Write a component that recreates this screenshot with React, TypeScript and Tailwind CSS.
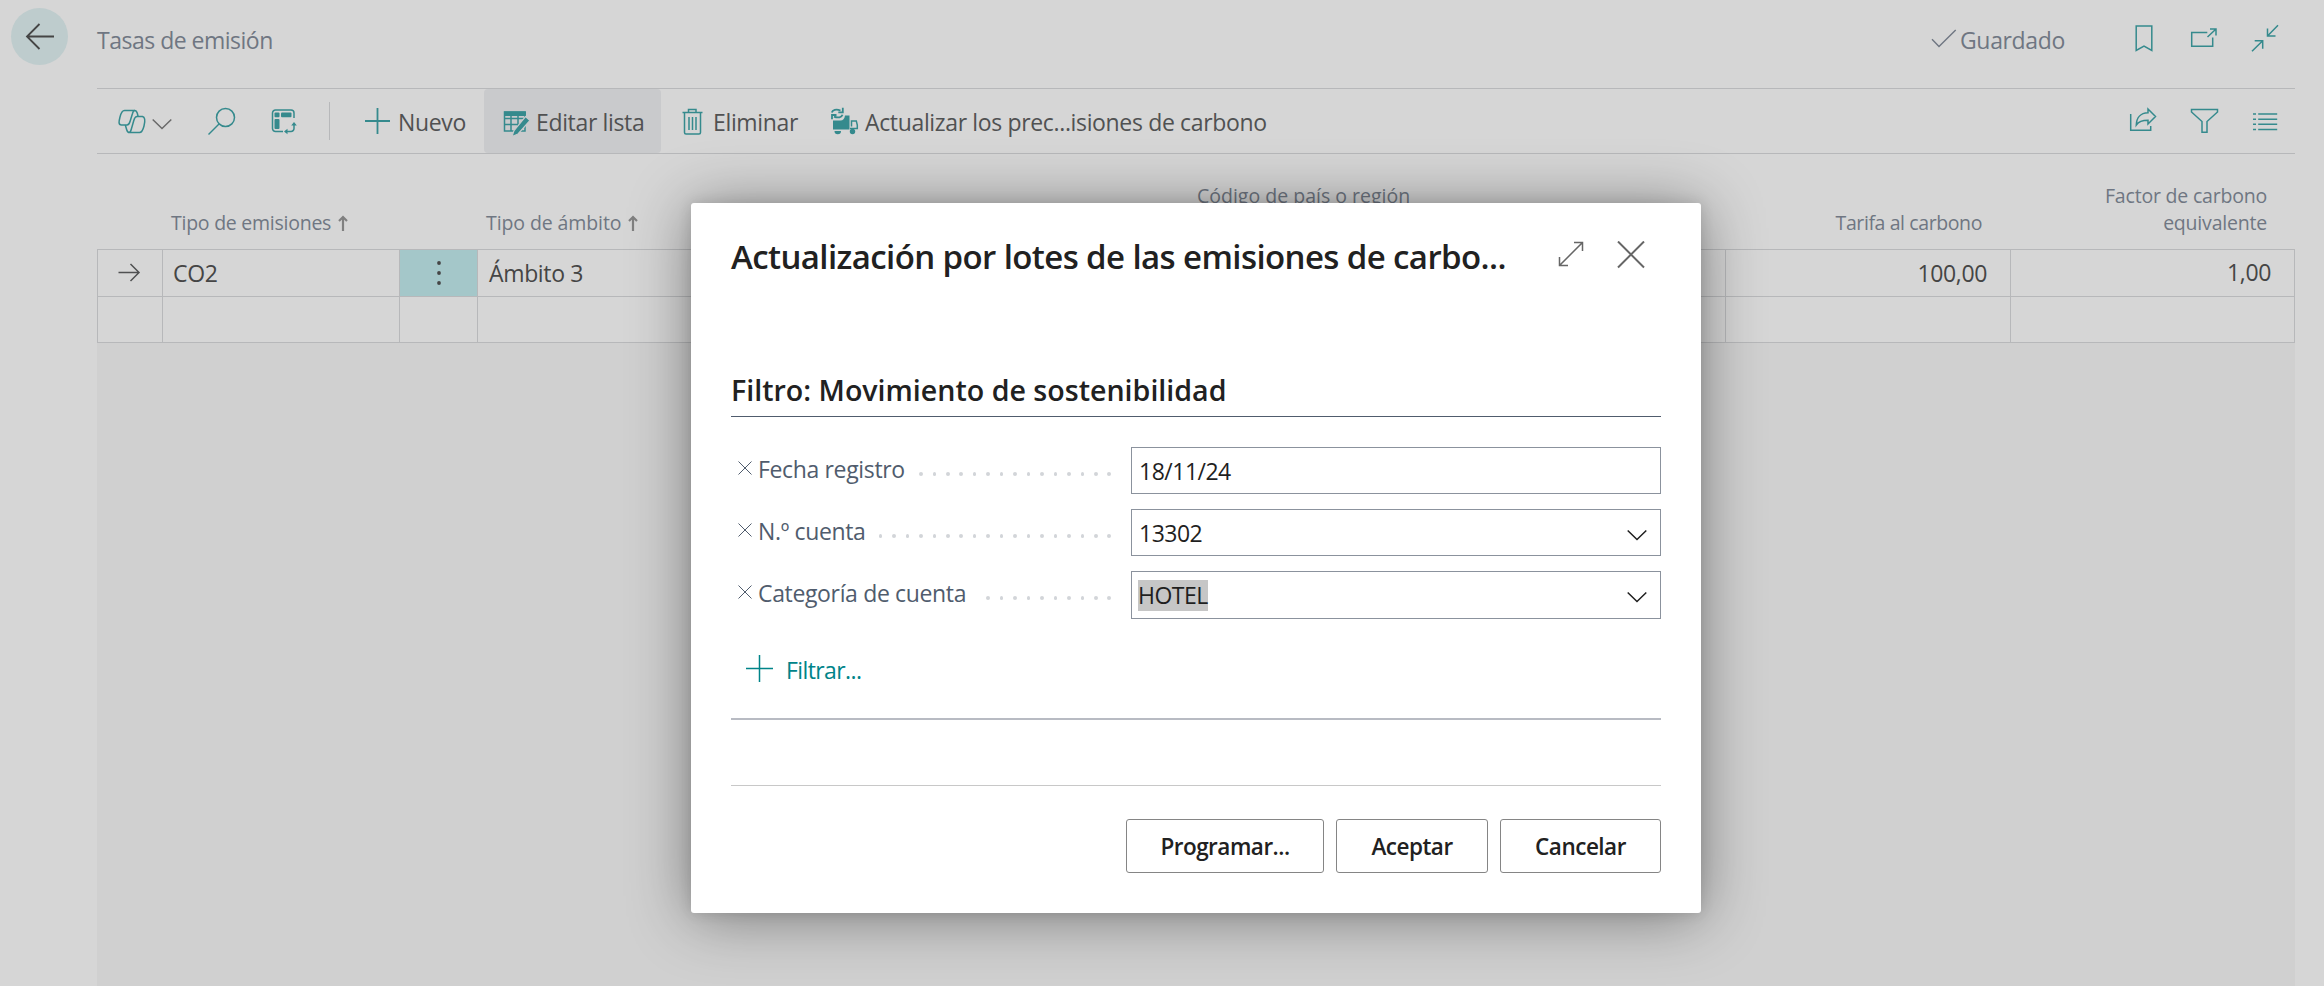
import type { ReactNode } from "react";

type IconProps = { children: ReactNode; className?: string; size?: string };

function Icon({ children, className = "size-8", size = "0 0 32 32" }: IconProps) {
  return (
    <svg viewBox={size} fill="none" stroke="currentColor" strokeWidth="1.5" className={`shrink-0 ${className}`}>
      {children}
    </svg>
  );
}

function Chevron() {
  return (
    <Icon className="h-8 w-5" size="0 0 20 32">
      <path d="M0.7 13.5 10 22.5 19.3 13.5" />
    </Icon>
  );
}

function SortArrow() {
  return (
    <svg viewBox="0 0 10 16" fill="none" stroke="#808080" strokeWidth="2.2" className="h-4 w-[10px] shrink-0">
      <path d="M5 16V2M1 6l4-4 4 4" />
    </svg>
  );
}

function Header() {
  return (
    <header className="flex h-[88px] shrink-0 items-center pb-2 text-[#6f7682]">
      <h1 className="tracking-[-0.5px]">Tasas de emisión</h1>
      <span className="ml-auto flex w-[200px] items-center">
        <Icon>
          <path d="M4 15.300 11 22.500 27.700 6" strokeWidth="1.4" />
        </Icon>
        <span>Guardado</span>
      </span>
      <div className="mr-[14px] flex text-[#358a8d]">
        <Icon>
          <path d="M8.200 2h15.600v24.500l-7.800-4.500-7.800 4.500z" />
        </Icon>
        <Icon className="ml-7 size-8">
          <path d="M19.300 8.500H3.700V22.200h21V13.500M19.500 13 28 5M22 5h6v6.500" />
        </Icon>
        <Icon className="ml-[29px] size-8">
          <path d="M29 1.300 18.500 12M18.500 4.500V12H26.500M3 27.300 13.700 16.700M5.700 16.700h8V24.700" />
        </Icon>
      </div>
    </header>
  );
}

function Toolbar() {
  return (
    <div className="flex h-[66px] shrink-0 items-center border-y border-[#b7b8ba] text-[#505152]">
      <div className="flex items-center pl-[19px] text-[#358a8d]">
        <Icon>
          <path d="M8.500 5.500h10c1.500 0 2.300 1 2.800 2.800l.7 2.700M8.500 5.500C6 5.500 5 8 4 12s-2 8 1.500 8H11c2 0 2.500-1.500 3.200-4l2.300-7.500c.4-1.500 1-3 2.500-3M23.500 27.500h-10c-1.500 0-2.300-1-2.800-2.800L9.300 20M23.500 27.500c2.500 0 3.500-2.500 4.500-6.500s2-8.500-1.500-9.500H21c-2 0-2.500 1.500-3.200 4l-2.300 8c-.4 1.500-1 4-2.500 4" />
        </Icon>
        <span className="ml-1 pt-px text-[#6a6a6a]">
          <Chevron />
        </span>
        <Icon className="ml-[33px] size-8">
          <circle cx="20.500" cy="12.500" r="9" />
          <path d="M14 19 3.500 29.500" />
        </Icon>
        <Icon className="ml-[31px] size-8">
          <path d="M15 26.500H7.500a3 3 0 0 1-3-3V8a3 3 0 0 1 3-3H23a3 3 0 0 1 3 3v5M17.500 26.500H23a3 3 0 0 0 3-3V19" />
          <path d="M26 17l2.800 3.500h-5.600zM16 26.500l3.500-2.800v5.600z" fill="currentColor" stroke="none" />
          <g fill="currentColor" stroke="none">
            <rect x="6.500" y="7.500" width="5" height="4.800" rx="1" />
            <rect x="13" y="7.500" width="10.500" height="4.800" rx="1" />
            <rect x="6.500" y="14" width="5" height="10" rx="1" />
          </g>
        </Icon>
      </div>
      <div className="ml-[29px] h-[38px] w-px bg-[#b7b8ba]" />
      <div className="flex h-full w-[154px] items-center gap-[3px] pl-[33px]">
        <Icon className="size-8 text-[#358a8d]">
          <path d="M14.500 3v26M2 16h25" strokeWidth="1.800" />
        </Icon>
        <span className="pt-0.5">Nuevo</span>
      </div>
      <div className="flex h-full w-[177px] items-center gap-1 rounded-[4px] bg-[#c9cacc] pl-4">
        <Icon className="size-8 text-[#358a8d]">
          <path d="M4.500 7h20.500v19H4.500zM4.500 13.500h20M4.500 19.500h15M11 11v15M18 11v14" />
          <path d="M4 6.500h22V11H4z" fill="currentColor" stroke="none" />
          <path d="M25.500 11.500l4.500 4-12 13.500-6 2.500 2-6z" fill="currentColor" stroke="#c9cacc" strokeWidth="1.200" />
        </Icon>
        <span className="pt-0.5">Editar lista</span>
      </div>
      <div className="flex h-full w-[151px] items-center gap-1 pl-4">
        <Icon className="size-8 text-[#358a8d]">
          <path d="M5.500 7.500h20M11.500 7V4.500h7.500V7M7.500 8v19.500q0 1.500 1.500 1.500h13q1.500 0 1.500-1.500V8M12 12v13M15.500 12v13M19 12v13" />
        </Icon>
        <span className="pt-0.5">Eliminar</span>
      </div>
      <div className="flex h-full items-center gap-[5px] pl-4">
        <Icon className="size-8 text-[#358a8d]">
          <path d="M5 15.500h7.500c2.500 0 4-1.500 4.500-5H21.500V24.500H5z" fill="currentColor" stroke="none" />
          <path d="M23.500 21.500V16h4.800l1 4v3.500H22" />
          <circle cx="24.500" cy="26.500" r="2.700" fill="currentColor" stroke="none" />
          <path d="M6.500 26h6.500a3.200 3.200 0 0 1-6.500 0z" fill="currentColor" stroke="none" />
          <path d="M3.800 7.500C4.500 5 8 3.500 12.500 5.500M14.800 2.800v4.500h-4.500M14.500 9.800c-.8 2.500-4.500 3.500-8.500 1.800M4 14.200V10h4.500" strokeWidth="1.800" />
        </Icon>
        <span className="pt-0.5">Actualizar los prec...isiones de carbono</span>
      </div>
      <div className="mr-[14px] ml-auto flex text-[#358a8d]">
        <Icon>
          <path d="M3.700 9V25.200h20V21M21 4 28.500 11.500 21 19V15.300c-5 0-9 .7-11.700 4.700C9.500 13 13.500 8 21 7.800z" />
        </Icon>
        <Icon className="ml-[30px] size-8">
          <path d="M2.500 4.500h26V7L18 16.500v10.700h-5V16.500L2.500 7z" />
        </Icon>
        <Icon className="ml-7 size-8">
          <path d="M4 9h3M9.200 9h19M4 14.200h3M9.200 14.200h19M4 19.300h3M9.200 19.300h19M4 24.500h3M9.200 24.500h19" />
        </Icon>
      </div>
    </div>
  );
}

const cols = "grid grid-cols-[65px_237px_78px_705px_543px_285px_285px]";

function RatesTable() {
  return (
    <>
      <div className={`${cols} h-[95px] shrink-0 items-end pb-[13px] text-[19.500px] leading-[27px] tracking-[-0.1px] text-[#6f7682]`}>
        <span />
        <span className="flex items-center gap-[7px] pl-[9px] tracking-[-0.25px]">
          Tipo de emisiones <SortArrow />
        </span>
        <span />
        <span className="flex items-center gap-[7px] pl-[9px]">
          Tipo de ámbito <SortArrow />
        </span>
        <span className="pb-[27px] pl-[15px] tracking-normal">Código de país o región</span>
        <span className="pr-[28px] text-right tracking-[-0.4px]">Tarifa al carbono</span>
        <span className="pr-[28px] text-right tracking-[-0.2px]">
          Factor de carbono
          <br />
          equivalente
        </span>
      </div>
      <div className={`${cols} h-[47px] shrink-0 border-t border-[#b7b8ba] *:flex *:items-center *:border-l *:border-[#b7b8ba]`}>
        <div className="pl-[20px] text-[#505152]">
          <Icon className="h-5 w-6" size="0 0 24 20">
            <path d="M0.500 9.500h20.500M12.500 1l8.500 8.500-8.500 8.500" />
          </Icon>
        </div>
        <div className="pl-[10px]">CO2</div>
        <div className="justify-center bg-[#a4c7c9]">
          <svg viewBox="0 0 6 26" fill="#454545" className="h-[26px] w-1.5">
            <circle cx="3" cy="3" r="1.900" />
            <circle cx="3" cy="13" r="1.900" />
            <circle cx="3" cy="23" r="1.900" />
          </svg>
        </div>
        <div className="pl-[11px]">Ámbito 3</div>
        <div />
        <div className="justify-end pr-[23px]">100,00</div>
        <div className="justify-end border-r pr-[23px] pb-0.5">1,00</div>
      </div>
      <div className={`${cols} h-[47px] shrink-0 border-y border-[#b7b8ba] *:border-l *:border-[#b7b8ba]`}>
        <div />
        <div />
        <div />
        <div />
        <div />
        <div />
        <div className="border-r" />
      </div>
    </>
  );
}

const filters = [
  { label: "Fecha registro", value: "18/11/24", dots: 15, lookup: false, selected: false },
  { label: "N.º cuenta", value: "13302", dots: 18, lookup: true, selected: false },
  { label: "Categoría de cuenta", value: "HOTEL", dots: 10, lookup: true, selected: true },
];

function FilterRow({ label, value, dots, lookup, selected }: (typeof filters)[number]) {
  return (
    <div className="flex h-12">
      <div className="flex w-[380px] shrink-0 pl-[7px] text-[#505c6d]">
        <svg viewBox="0 0 14 14" fill="none" stroke="currentColor" className="mt-[14px] size-[14px] shrink-0">
          <path d="M0.500 0.500l13 13M13.500 0.500l-13 13" />
        </svg>
        <span className="ml-1.5 pt-1.5 whitespace-nowrap">{label}</span>
        <div className="ml-auto flex gap-[9.860px] pt-[25px]">
          {Array.from({ length: dots }, (_, i) => (
            <i key={i} className="size-[3.600px] rounded-full bg-[#d2d5d9]" />
          ))}
        </div>
      </div>
      <div
        className={`ml-5 flex w-[530px] items-center border border-[#8b929d] px-1.5 tracking-[-0.5px] text-[#1f1f1f] ${selected ? "h-12" : "h-[47px]"}`}
      >
        <span className={selected ? "mt-px bg-[#c6c6c6] leading-[31px]" : "pl-px"}>{value}</span>
        {lookup && (
          <span className={`mr-[7px] ml-auto ${selected ? "-mt-px" : ""}`}>
            <Chevron />
          </span>
        )}
      </div>
    </div>
  );
}

function BatchDialog() {
  return (
    <div className="flex h-[710px] w-[1010px] flex-col rounded-[3px] bg-white px-10 text-[#212121] shadow-[0_0_14px_rgba(0,0,0,0.12),0_4px_62px_rgba(0,0,0,0.42)]">
      <div className="flex h-[90px] items-center pt-[14px]">
        <h2 className="pt-1 text-[33px] font-semibold tracking-[-0.6px] whitespace-nowrap">
          Actualización por lotes de las emisiones de carbo...
        </h2>
        <div className="mr-4 ml-auto flex gap-[33px] text-[#666]">
          <Icon className="size-[26px]" size="0 0 26 26">
            <path d="M1.500 24.500l23-23M16 1.500h8.500V10M1.500 16v8.500H10" />
          </Icon>
          <Icon className="size-[28px]" size="0 0 28 28">
            <path d="M1 0.500l26 26M27 0.500l-26 26" strokeWidth="2" />
          </Icon>
        </div>
      </div>
      <h3 className="mt-[70px] flex h-[54px] items-center border-b border-[#505c6d] text-[28.600px] font-semibold tracking-normal">
        Filtro: Movimiento de sostenibilidad
      </h3>
      <div className="mt-[30px] flex flex-col gap-[14px]">
        {filters.map((f) => (
          <FilterRow key={f.label} {...f} />
        ))}
      </div>
      <div className="mt-[31px] flex items-center pl-[15px] text-[#008489]">
        <Icon className="size-[27px]" size="0 0 27 27">
          <path d="M13.500 0v27M0 13.500h27" />
        </Icon>
        <span className="ml-[13px] pt-1 tracking-[-0.6px]">Filtrar...</span>
      </div>
      <div className="mt-auto border-t-2 border-[#b8bbc3]" />
      <div className="mt-[65px] flex justify-end gap-3 border-t border-[#c8c8c8] pt-[33px] pb-10 text-[22.500px] font-semibold tracking-[-0.5px]">
        <button className="h-[54px] w-[198px] rounded-[3px] border border-[#858585] pt-0.5">Programar...</button>
        <button className="h-[54px] w-[152px] rounded-[3px] border border-[#858585] pt-0.5">Aceptar</button>
        <button className="h-[54px] w-[161px] rounded-[3px] border border-[#858585] pt-0.5">Cancelar</button>
      </div>
    </div>
  );
}

export default function App() {
  return (
    <div className="relative flex h-[986px] w-[2324px] overflow-hidden bg-[#d6d6d6] font-['Open_Sans','Noto_Sans',sans-serif] text-[23px] leading-8 tracking-[-0.35px] text-[#454545]">
      <aside className="w-[97px] shrink-0 pt-2 pl-[11px]">
        <div className="flex size-[57px] items-center justify-center rounded-full bg-[#becccd] text-[#454545]">
          <Icon className="size-8">
            <path d="M3 15.500h27M15.500 3 3 15.500l12.500 12.500" strokeWidth="1.800" />
          </Icon>
        </div>
      </aside>
      <main className="flex w-[2198px] flex-col">
        <Header />
        <Toolbar />
        <RatesTable />
        <div className="flex-1 bg-[#d0d0d0]" />
      </main>
      <div className="absolute inset-0 flex items-start pt-[203px] pl-[691px]">
        <BatchDialog />
      </div>
    </div>
  );
}
